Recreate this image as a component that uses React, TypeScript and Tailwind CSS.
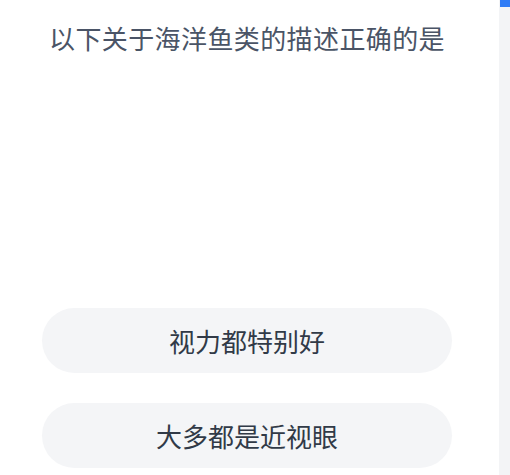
const options = ['视力都特别好', '大多都是近视眼'];

export default function App() {
  return (
    <div
      className="flex h-[475px] w-[510px] overflow-hidden bg-white"
      style={{ fontFamily: '"Noto Sans CJK SC", "Noto Sans", sans-serif' }}
    >
      {/* Kartu soal */}
      <div className="flex w-[499px] flex-col items-center pr-[5px]">
        <h1 className="mt-[25px] text-[26px] leading-[26px] font-normal text-[#4a5466] tracking-[0.4px]">
          以下关于海洋鱼类的描述正确的是
        </h1>

        <div className="mt-auto mb-[7px] flex flex-col gap-[30px]">
          {options.map((opt) => (
            <button
              key={opt}
              className="flex h-[65px] w-[410px] items-center justify-center rounded-full bg-[#f4f5f7] text-[26px] font-normal text-[#313a47]"
            >
              {opt}
            </button>
          ))}
        </div>
      </div>

      {/* Strip kanan */}
      <div className="flex w-[11px] flex-col bg-[#f3f4f6]">
        <div className="ml-[1px] h-[7px] bg-[#2f7cf6]" />
      </div>
    </div>
  );
}
